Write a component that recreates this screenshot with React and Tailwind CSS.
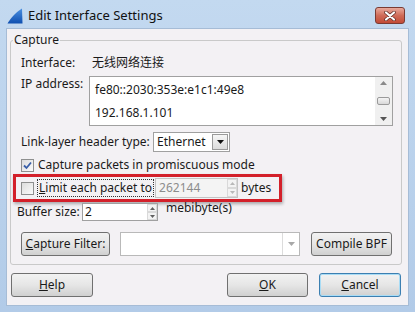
const font = { fontFamily: '"Noto Sans", "Noto Sans CJK SC", sans-serif' };

function SharkFin() {
  return (
    <svg width="16" height="16" viewBox="0 0 16 16">
      <defs>
        <linearGradient id="fin" x1="0" y1="0" x2="0" y2="1">
          <stop offset="0" stopColor="#4a8fe0" />
          <stop offset="1" stopColor="#0f4fb0" />
        </linearGradient>
      </defs>
      <path d="M0.5 15.5 C3 11 8 5 15 0.5 L15.5 15.5 Z" fill="url(#fin)" />
    </svg>
  );
}

function CloseBtn() {
  return (
    <div className="w-[30px] h-[17px] rounded-[3px] border border-[#7a3b33] bg-gradient-to-b from-[#e8a99c] via-[#cf6b58] to-[#c24a36] flex items-center justify-center">
      <svg width="12" height="10" viewBox="0 0 12 10">
        <path d="M2 1.5 L10 8.5 M10 1.5 L2 8.5" stroke="#5a2a24" strokeWidth="3.6" strokeLinecap="round" />
        <path d="M2 1.5 L10 8.5 M10 1.5 L2 8.5" stroke="#ffffff" strokeWidth="2.2" strokeLinecap="round" />
      </svg>
    </div>
  );
}

function Btn({ children, className = "" }) {
  return (
    <div
      className={
        "flex items-center justify-center rounded-[3px] border border-[#707070] bg-gradient-to-b from-[#f2f2f2] via-[#e6e6e6] to-[#d0d0d0] text-[12px] text-[#1a1a1a] " +
        className
      }
    >
      {children}
    </div>
  );
}

function CheckBox({ checked }) {
  return (
    <div className="w-[13px] h-[13px] border border-[#8e8f8f] bg-gradient-to-br from-[#dcdcdc] to-[#fbfbfb] flex items-center justify-center">
      {checked && (
        <svg width="9" height="9" viewBox="0 0 9 9">
          <path d="M1 4.5 L3.5 7 L8 1.5" fill="none" stroke="#3a5fa8" strokeWidth="1.8" />
        </svg>
      )}
    </div>
  );
}

function SpinArrows({ disabled }) {
  const c = disabled ? "#b8b8b8" : "#606060";
  return (
    <div className="flex flex-col w-[10px] h-full">
      <div className="flex-1 flex items-center justify-center border border-[#d9d9d9] bg-[#f3f3f3]">
        <svg width="5" height="3" viewBox="0 0 5 3"><path d="M0 3 L2.5 0 L5 3 Z" fill={c} /></svg>
      </div>
      <div className="flex-1 flex items-center justify-center border border-[#d9d9d9] bg-[#f3f3f3]">
        <svg width="5" height="3" viewBox="0 0 5 3"><path d="M0 0 L2.5 3 L5 0 Z" fill={c} /></svg>
      </div>
    </div>
  );
}

export default function App() {
  return (
    <div
      style={font}
      className="w-[415px] h-[312px] bg-gradient-to-b from-[#c3d9f0] to-[#b2cbe8] flex flex-col text-[12px] text-[#1a1a1a]"
    >
      {/* TITLE BAR */}
      <div className="h-[28px] flex items-start pl-[7px] pr-[10px] pt-[8px]">
        <SharkFin />
        <span className="ml-[5px] text-[13px] leading-[14px] text-[#111]">Edit Interface Settings</span>
        <div className="ml-auto -mt-[1px]">
          <CloseBtn />
        </div>
      </div>

      {/* CONTENT */}
      <div className="mx-[6px] h-[278px] bg-[#f3f1f4] border border-[#a6bcd6] flex flex-col">
        {/* CAPTURE GROUP */}
        <div className="relative mt-[11px] ml-[3px] mr-[6px] h-[225px] border border-[#c9c9c9] rounded-[3px] flex flex-col">
          <span className="absolute -top-[9px] left-[2px] px-[1px] bg-[#f3f1f4] leading-[16px]">Capture</span>

          {/* Interface */}
          <div className="mt-[12px] h-[20px] flex items-center pl-[10px]">
            <span className="w-[71px]">Interface:</span>
            <span>无线网络连接</span>
          </div>

          {/* IP address */}
          <div className="mt-[3px] flex items-start pl-[10px]">
            <span className="w-[68px] mt-[-1px]">IP address:</span>
            <div className="w-[304px] h-[50px] border border-[#a0a0a0] bg-white flex">
              <div className="flex-1 flex flex-col pt-[1px] pl-[5px]">
                <div className="h-[23px] flex items-center">fe80::2030:353e:e1c1:49e8</div>
                <div className="h-[23px] flex items-center">192.168.1.101</div>
              </div>
              <div className="w-[17px] bg-[#f0f0f0] flex flex-col items-center justify-between py-[4px]">
                <svg width="7" height="4" viewBox="0 0 7 4"><path d="M0 4 L3.5 0 L7 4 Z" fill="#8a8a8a" /></svg>
                <div className="w-[13px] h-[8px] rounded-[2px] border border-[#9a9a9a] bg-gradient-to-b from-[#f4f4f4] to-[#d8d8d8]" />
                <svg width="7" height="4" viewBox="0 0 7 4"><path d="M0 0 L3.5 4 L7 0 Z" fill="#555" /></svg>
              </div>
            </div>
          </div>

          {/* Link-layer */}
          <div className="mt-[6px] h-[20px] flex items-center pl-[10px]">
            <span className="w-[132px]">Link-layer header type:</span>
            <div className="w-[77px] h-[20px] border border-[#a0a0a0] bg-white flex items-center">
              <span className="flex-1 pl-[3px]">Ethernet</span>
              <div className="w-[16px] h-[16px] mr-[1px] border border-[#9a9a9a] bg-gradient-to-b from-[#f6f6f6] to-[#dcdcdc] flex items-center justify-center">
                <svg width="7" height="4" viewBox="0 0 7 4"><path d="M0 0 L3.5 4 L7 0 Z" fill="#111" /></svg>
              </div>
            </div>
          </div>

          {/* Promiscuous */}
          <div className="mt-[5px] h-[16px] flex items-center pl-[10px] gap-[4px]">
            <CheckBox checked />
            <span>Capture packets in promiscuous mode</span>
          </div>

          {/* Limit packet */}
          <div className="mt-[1px] ml-[2px] w-[269px] h-[28px] border-[3px] border-[#d3202a] shadow-[1px_2px_3px_rgba(0,0,0,0.3)] flex items-center pl-[5px]">
            <CheckBox />
            <span className="ml-[3px] px-[1px] h-[18px] flex items-center border border-dotted border-[#333]">
              <span className="underline">L</span>imit each packet to
            </span>
            <div className="ml-[1px] w-[83px] h-[20px] border border-[#c4c4c4] bg-[#f4f4f4] flex items-center">
              <span className="flex-1 pl-[3px] text-[#8c8c8c]">262144</span>
              <SpinArrows disabled />
            </div>
            <span className="ml-[3px]">bytes</span>
          </div>

          {/* Buffer size */}
          <div className="mt-[1px] h-[18px] flex items-center pl-[6px]">
            <span className="w-[65px]">Buffer size:</span>
            <div className="w-[76px] h-[18px] border border-[#a0a0a0] bg-white flex items-center">
              <span className="flex-1 pl-[2px]">2</span>
              <SpinArrows />
            </div>
            <span className="ml-[8px] -mt-[8px]">mebibyte(s)</span>
          </div>

          {/* Capture filter */}
          <div className="mt-[11px] h-[24px] flex items-center pl-[10px]">
            <Btn className="w-[89px] h-[24px]">
              <span><span className="underline">C</span>apture Filter:</span>
            </Btn>
            <div className="ml-[10px] w-[180px] h-[24px] border border-[#b9b9b9] bg-white flex items-center justify-end">
              <div className="w-[17px] h-[22px] border-l border-[#dcdcdc] flex items-center justify-center">
                <svg width="7" height="4" viewBox="0 0 7 4"><path d="M0 0 L3.5 4 L7 0 Z" fill="#a8a8a8" /></svg>
              </div>
            </div>
            <Btn className="ml-[11px] w-[81px] h-[24px]">Compile BPF</Btn>
          </div>
        </div>

        {/* BUTTONS */}
        <div className="mt-[8px] flex items-center pl-[4px] pr-[7px]">
          <Btn className="w-[82px] h-[24px]">
            <span><span className="underline">H</span>elp</span>
          </Btn>
          <Btn className="ml-auto w-[81px] h-[24px]">
            <span><span className="underline">O</span>K</span>
          </Btn>
          <Btn className="ml-[11px] w-[82px] h-[24px] !border-[#3c7fb1] shadow-[inset_0_0_0_1px_#a9dcf5]">
            <span><span className="underline">C</span>ancel</span>
          </Btn>
        </div>
      </div>
    </div>
  );
}
